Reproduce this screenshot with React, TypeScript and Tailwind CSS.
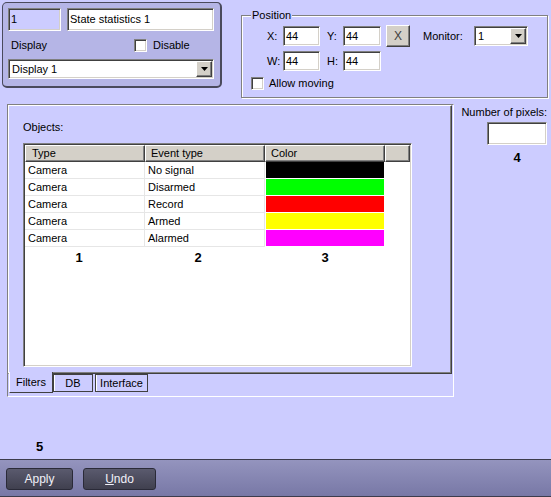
import React from 'react'

const sunken =
  'border border-t-[#808080] border-l-[#808080] border-r-white border-b-white shadow-[inset_1px_1px_0_#404040,inset_-1px_-1px_0_#d4d0c8]'
const raised =
  'border border-t-white border-l-white border-r-[#404040] border-b-[#404040] shadow-[inset_-1px_-1px_0_#808080]'

const rows = [
  { type: 'Camera', event: 'No signal', color: '#000000' },
  { type: 'Camera', event: 'Disarmed', color: '#00ff00' },
  { type: 'Camera', event: 'Record', color: '#ff0000' },
  { type: 'Camera', event: 'Armed', color: '#ffff00' },
  { type: 'Camera', event: 'Alarmed', color: '#ff00ff' },
]

function Arrow() {
  return (
    <svg width="7" height="4" viewBox="0 0 7 4">
      <path d="M0 0h7L3.5 4z" fill="#000" />
    </svg>
  )
}

function Combo({ value, className }: { value: string; className: string }) {
  return (
    <div className={`flex items-center bg-white pr-[1px] ${sunken} ${className}`}>
      <span className="flex-1 pl-[3px] whitespace-nowrap">{value}</span>
      <div className={`w-[16px] h-[16px] bg-[#d4d0c8] flex items-center justify-center ${raised}`}>
        <Arrow />
      </div>
    </div>
  )
}

function Field({ value, className }: { value?: string; className: string }) {
  return (
    <div className={`flex items-center pl-[2px] whitespace-nowrap ${sunken} ${className}`}>{value}</div>
  )
}

function Check() {
  return <div className={`w-[13px] h-[13px] bg-white shrink-0 ${sunken}`} />
}

export default function App() {
  return (
    <div className="w-[551px] h-[497px] bg-[#ccccff] flex flex-col overflow-hidden font-['Liberation_Sans',Arial,sans-serif] text-[11px] text-black leading-[13px]">
      {/* top row */}
      <div className="flex items-start pl-[2px] pt-[2px]">
        <div className="w-[220px] h-[86px] rounded-[5px] border border-[#4a4a5c] border-r-2 border-b-2 bg-[#b5b5e6] px-[5px] pt-[5px]">
          <div className="flex gap-[6px]">
            <Field value="1" className="w-[53px] h-[23px] bg-[#ccccff]" />
            <Field value="State statistics 1" className="w-[147px] h-[23px] bg-white" />
          </div>
          <div className="flex items-center h-[13px] mt-[8px]">
            <span className="w-[126px] pl-[3px]">Display</span>
            <Check />
            <span className="ml-[6px]">Disable</span>
          </div>
          <Combo value="Display 1" className="w-[206px] h-[20px] mt-[7px]" />
        </div>

        <div className="relative ml-[19px] mt-[13px] w-[307px] h-[83px] border border-[#808080] shadow-[1px_1px_0_white,inset_1px_1px_0_white]">
          <span className="absolute -top-[7px] left-[9px] bg-[#ccccff] px-[1px]">Position</span>
          <div className="flex items-center pl-[25px] pt-[9px] h-[31px]">
            <span className="w-[16px]">X:</span>
            <Field value="44" className="w-[37px] h-[20px] bg-white" />
            <span className="w-[16px] ml-[7px]">Y:</span>
            <Field value="44" className="w-[38px] h-[20px] bg-white" />
            <div className={`ml-[5px] w-[24px] h-[22px] bg-[#d4d0c8] flex items-center justify-center text-[12px] text-[#404040] ${raised}`}>
              X
            </div>
            <span className="ml-[13px] w-[51px]">Monitor:</span>
            <Combo value="1" className="w-[54px] h-[20px]" />
          </div>
          <div className="flex items-center pl-[25px] mt-[4px]">
            <span className="w-[16px]">W:</span>
            <Field value="44" className="w-[37px] h-[20px] bg-white" />
            <span className="w-[16px] ml-[7px]">H:</span>
            <Field value="44" className="w-[38px] h-[20px] bg-white" />
          </div>
          <div className="flex items-center pl-[9px] mt-[6px]">
            <Check />
            <span className="ml-[5px]">Allow moving</span>
          </div>
        </div>
      </div>

      {/* main row */}
      <div className="flex items-start pl-[7px] mt-[6px]">
        <div className="w-[447px] h-[293px] border border-t-[#808080] border-l-[#808080] border-r-white border-b-white flex flex-col">
          <div className="w-[444px] h-[269px] border border-t-white border-l-white border-r-[#404040] border-b-[#404040] shadow-[inset_-1px_-1px_0_#808080] pl-[14px] pt-[15px]">
            <div>Objects:</div>
            <div className={`mt-[9px] w-[389px] h-[224px] bg-white pl-[1px] pt-[1px] ${sunken}`}>
              <div className="flex h-[17px]">
                {['Type', 'Event type', 'Color'].map((h, i) => (
                  <div
                    key={h}
                    className={`w-[120px] h-[17px] bg-[#d4d0c8] flex items-center ${i === 0 ? 'pl-[6px]' : 'pl-[5px]'} ${raised}`}
                  >
                    {h}
                  </div>
                ))}
                <div className={`w-[25px] h-[17px] bg-[#d4d0c8] ${raised}`} />
              </div>
              {rows.map((r) => (
                <div key={r.event} className="flex h-[17px]">
                  <div className="w-[120px] border-r border-b border-[#e6e6e6] pl-[3px] flex items-center">{r.type}</div>
                  <div className="w-[120px] border-r border-b border-[#e6e6e6] pl-[3px] flex items-center">{r.event}</div>
                  <div className="w-[120px] border-r border-b border-white pl-[1px]">
                    <div className="h-full w-full" style={{ backgroundColor: r.color }} />
                  </div>
                </div>
              ))}
              <div className="flex mt-[3px] font-bold text-[13px] leading-[15px]">
                <div className="w-[108px] text-center">1</div>
                <div className="w-[130px] text-center">2</div>
                <div className="w-[124px] text-center">3</div>
              </div>
            </div>
          </div>
          <div className="flex items-start">
            <div className="ml-[1px] -mt-[2px] w-[44px] h-[21px] bg-[#ccccff] border-l border-l-white border-r border-r-[#404040] border-b border-b-[#404040] flex items-center justify-center">
              Filters
            </div>
            <div className="w-[40px] h-[18px] border border-[#404040] shadow-[inset_1px_0_0_white] flex items-center justify-center">
              DB
            </div>
            <div className="ml-[2px] w-[53px] h-[18px] border border-[#404040] shadow-[inset_1px_0_0_white] flex items-center justify-center">
              Interface
            </div>
          </div>
        </div>

        <div className="ml-[10px] w-[83px] pt-[2px] flex flex-col items-end">
          <div className="text-right whitespace-nowrap">Number of pixels:</div>
          <Field className="mt-[3px] w-[60px] h-[23px] bg-white" />
          <div className="mt-[5px] w-[60px] text-center font-bold text-[13px] leading-[15px]">4</div>
        </div>
      </div>

      <div className="flex-1 flex items-end pl-[36px] pb-[5px] font-bold text-[13px] leading-[15px]">5</div>

      {/* bottom bar */}
      <div className="h-[38px] border-t border-b border-[#3c3c4c] bg-gradient-to-b from-[#9494be] to-[#7878a6] flex items-start gap-[10px] pl-[6px] pt-[8px]">
        <button className="w-[67px] h-[22px] rounded-[3px] border border-[#2a2a38] bg-gradient-to-b from-[#5a5a6e] to-[#40404f] text-[#f0f0f8] text-[12px]">
          Apply
        </button>
        <button className="w-[73px] h-[22px] rounded-[3px] border border-[#2a2a38] bg-gradient-to-b from-[#5a5a6e] to-[#40404f] text-[#f0f0f8] text-[12px]">
          <span className="underline">U</span>ndo
        </button>
      </div>
    </div>
  )
}
